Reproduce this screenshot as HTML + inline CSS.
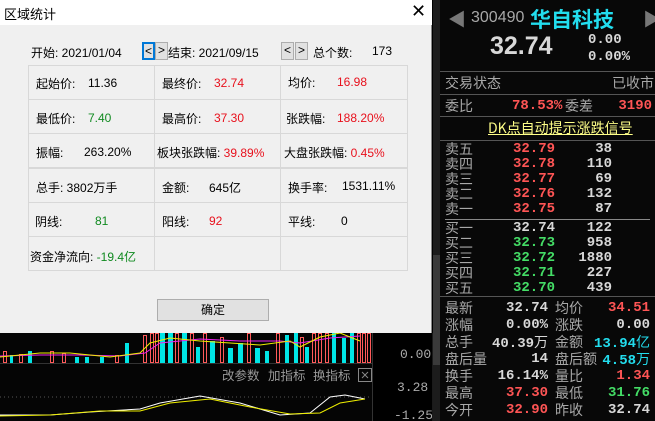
<!DOCTYPE html>
<html><head><meta charset="utf-8"><style>
*{margin:0;padding:0;box-sizing:border-box}
body{width:655px;height:421px;overflow:hidden;background:#000;font-family:"Liberation Sans","Noto Sans CJK SC",sans-serif;position:relative}
.a{position:absolute;white-space:nowrap}
#dlg{position:absolute;left:0;top:0;width:432px;height:333px;background:#f0f0f0;border-right:1px solid #888}
#tb{position:absolute;left:0;top:0;width:432px;height:25px;background:#fff}
.d{font-size:12px;color:#000}
.r{color:#e8101c}.g{color:#108a20}
.cell{position:absolute;border:1px solid #d8d8d8}
.btn{position:absolute;height:18px;width:13px;border:1px solid #adadad;background:#e1e1e1;font-size:12px;text-align:center;line-height:15px}
#rp{position:absolute;left:440px;top:0;width:215px;height:421px;background:#080808;font-family:"Liberation Mono","Noto Sans CJK SC",monospace;font-size:14px}
#rp .l{position:absolute;font-family:"Noto Sans CJK SC",sans-serif;font-size:14px;color:#a8a8a8;line-height:16px;white-space:nowrap}
#rp b{position:absolute;font-size:14px;line-height:16px;white-space:nowrap}
.gr{color:#a8a8a8}.w{color:#d8d8d8}.rd{color:#ff5555}.gn{color:#44dd66}.cy{color:#22ddee}
.hl{position:absolute;left:0;width:215px;height:1px;background:#555}
</style></head><body>
<svg class="a" style="left:0;top:333px" width="440" height="88">
<rect x="0" y="0" width="372" height="88" fill="#050505"/>
<g fill="#00e5e5">
<rect x="10" y="22" width="3" height="8"/><rect x="28" y="18" width="4" height="12"/><rect x="75" y="24" width="4" height="6"/><rect x="85" y="24" width="4" height="6"/><rect x="100" y="24" width="4" height="6"/><rect x="125" y="10" width="4" height="20"/><rect x="160" y="0" width="5" height="30"/><rect x="168" y="0" width="5" height="30"/><rect x="182" y="0" width="5" height="30"/><rect x="196" y="14" width="4" height="16"/><rect x="210" y="8" width="5" height="22"/><rect x="228" y="15" width="5" height="15"/><rect x="238" y="10" width="5" height="20"/><rect x="255" y="15" width="5" height="15"/><rect x="265" y="18" width="4" height="12"/><rect x="285" y="2" width="4" height="28"/><rect x="294" y="0" width="4" height="30"/><rect x="305" y="14" width="4" height="16"/><rect x="332" y="0" width="4" height="30"/><rect x="342" y="5" width="4" height="25"/><rect x="350" y="0" width="4" height="30"/>
</g>
<g fill="none" stroke="#ff5a5a">
<rect x="3.5" y="18.5" width="3" height="11"/><rect x="19.5" y="21.5" width="3" height="8"/><rect x="50.5" y="18.5" width="3" height="11"/><rect x="62.5" y="20.5" width="3" height="9"/><rect x="115.5" y="22.5" width="3" height="7"/><rect x="143.5" y="2.5" width="3" height="27"/><rect x="150.5" y="0.5" width="3" height="29"/><rect x="155.5" y="0.5" width="3" height="29"/><rect x="175.5" y="0.5" width="3" height="29"/><rect x="190.5" y="0.5" width="3" height="29"/><rect x="203.5" y="0.5" width="3" height="29"/><rect x="220.5" y="4.5" width="3" height="25"/><rect x="247.5" y="0.5" width="3" height="29"/><rect x="276.5" y="0.5" width="3" height="29"/><rect x="300.5" y="4.5" width="3" height="25"/><rect x="312.5" y="0.5" width="3" height="29"/><rect x="318.5" y="0.5" width="3" height="29"/><rect x="325.5" y="0.5" width="3" height="29"/><rect x="357.5" y="0.5" width="3" height="29"/><rect x="362.5" y="0.5" width="3" height="29"/><rect x="367.5" y="0.5" width="3" height="29"/>
</g>
<polyline points="0,23 40,22 80,22 120,23 145,20 160,10 200,6 240,8 280,8 300,10 330,5 360,3" stroke="#ee22ee" fill="none"/>
<polyline points="0,24 40,20 70,20 110,24 140,20 150,10 170,5 200,8 230,10 260,12 290,8 300,14 320,4 340,0 360,8" stroke="#eeee00" fill="none"/>
<rect x="0" y="30" width="372" height="1" fill="#333"/>
<rect x="372" y="0" width="1" height="88" fill="#333"/>
<text x="400" y="25" fill="#aaa" font-size="13" font-family="Liberation Mono">0.00</text>
<text x="222" y="47" fill="#999" font-size="12.5" font-family="Noto Sans CJK SC">改参数</text>
<text x="268" y="47" fill="#999" font-size="12.5" font-family="Noto Sans CJK SC">加指标</text>
<text x="313" y="47" fill="#999" font-size="12.5" font-family="Noto Sans CJK SC">换指标</text>
<rect x="358.5" y="35.5" width="13" height="13" fill="none" stroke="#888"/>
<path d="M362 39l6 6M368 39l-6 6" stroke="#888"/>
<line x1="0" y1="64" x2="372" y2="64" stroke="#555" stroke-dasharray="1,3"/>
<text x="397" y="58" fill="#aaa" font-size="13" font-family="Liberation Mono">3.28</text>
<text x="394" y="86" fill="#aaa" font-size="13" font-family="Liberation Mono">-1.25</text>
<polyline points="0,82 50,82 90,79 140,76 160,70 200,63 240,70 280,82 310,80 330,64 345,62 365,66" stroke="#fff" fill="none"/>
<polyline points="0,83 50,82 100,78 140,78 170,70 210,66 250,74 290,81 320,80 340,70 365,66" stroke="#ee0" fill="none"/>
<rect x="432" y="0" width="8" height="88" fill="#1a1a1a"/>
</svg>
<div id="dlg">
<div id="tb"><span class="a d" style="left:4px;top:4px;font-size:13px">区域统计</span><span class="a" style="left:411px;top:1px;font-size:18px">✕</span></div>
<span class="a d" style="left:31px;top:44px">开始: 2021/01/04</span>
<div class="btn" style="left:142px;top:42px;border:2px solid #0078d7">&lt;</div>
<div class="btn" style="left:155px;top:42px">&gt;</div>
<span class="a d" style="left:168px;top:44px">结束: 2021/09/15</span>
<div class="btn" style="left:281px;top:42px">&lt;</div>
<div class="btn" style="left:295px;top:42px">&gt;</div>
<span class="a d" style="left:313px;top:44px">总个数:</span><span class="a d" style="left:372px;top:44px">173</span>
<div class="cell" style="left:28px;top:65px;width:127px;height:35px"></div><div class="cell" style="left:154px;top:65px;width:127px;height:35px"></div><div class="cell" style="left:280px;top:65px;width:128px;height:35px"></div>
<div class="cell" style="left:28px;top:99px;width:127px;height:35px"></div><div class="cell" style="left:154px;top:99px;width:127px;height:35px"></div><div class="cell" style="left:280px;top:99px;width:128px;height:35px"></div>
<div class="cell" style="left:28px;top:133px;width:127px;height:35px"></div><div class="cell" style="left:154px;top:133px;width:127px;height:35px"></div><div class="cell" style="left:280px;top:133px;width:128px;height:35px"></div>
<div class="cell" style="left:28px;top:168px;width:127px;height:35px"></div><div class="cell" style="left:154px;top:168px;width:127px;height:35px"></div><div class="cell" style="left:280px;top:168px;width:128px;height:35px"></div>
<div class="cell" style="left:28px;top:202px;width:127px;height:35px"></div><div class="cell" style="left:154px;top:202px;width:127px;height:35px"></div><div class="cell" style="left:280px;top:202px;width:128px;height:35px"></div>
<div class="cell" style="left:28px;top:236px;width:127px;height:35px"></div><div class="cell" style="left:154px;top:236px;width:127px;height:35px"></div><div class="cell" style="left:280px;top:236px;width:128px;height:35px"></div>
<span class="a d" style="left:36px;top:75px">起始价:</span><span class="a d" style="left:88px;top:76px">11.36</span>
<span class="a d" style="left:162px;top:75px">最终价:</span><span class="a d r" style="left:214px;top:76px">32.74</span>
<span class="a d" style="left:288px;top:74px">均价:</span><span class="a d r" style="left:337px;top:75px">16.98</span>
<span class="a d" style="left:36px;top:110px">最低价:</span><span class="a d g" style="left:88px;top:111px">7.40</span>
<span class="a d" style="left:162px;top:110px">最高价:</span><span class="a d r" style="left:214px;top:111px">37.30</span>
<span class="a d" style="left:286px;top:110px">张跌幅:</span><span class="a d r" style="left:337px;top:111px">188.20%</span>
<span class="a d" style="left:36px;top:144px">振幅:</span><span class="a d" style="left:84px;top:145px">263.20%</span>
<span class="a d" style="left:157px;top:144px">板块张跌幅: <span class="r">39.89%</span></span>
<span class="a d" style="left:284px;top:144px">大盘张跌幅: <span class="r">0.45%</span></span>
<span class="a d" style="left:36px;top:179px">总手: 3802万手</span>
<span class="a d" style="left:162px;top:179px">金额:</span><span class="a d" style="left:209px;top:179px">645亿</span>
<span class="a d" style="left:288px;top:179px">换手率:</span><span class="a d" style="left:342px;top:179px">1531.11%</span>
<span class="a d" style="left:35px;top:213px">阴线:</span><span class="a d g" style="left:95px;top:214px">81</span>
<span class="a d" style="left:162px;top:213px">阳线:</span><span class="a d r" style="left:209px;top:214px">92</span>
<span class="a d" style="left:288px;top:213px">平线:</span><span class="a d" style="left:341px;top:214px">0</span>
<span class="a d" style="left:30px;top:248px">资金净流向: <span class="g">-19.4亿</span></span>
<div class="a" style="left:157px;top:299px;width:112px;height:22px;border:1px solid #adadad;background:#e1e1e1;font-size:12px;text-align:center;line-height:20px">确定</div>
</div>
<div class="a" style="left:433px;top:0;width:7px;height:421px;background:#1c1c1c"></div>
<div class="a" style="left:433px;top:255px;width:7px;height:110px;background:#3a3a3a"></div>
<div id="rp">
<span class="a" style="left:8px;top:6px;color:#777;font-size:18px">◀</span><span class="a" style="left:203px;top:6px;color:#777;font-size:18px">▶</span>
<span class="a gr" style="left:31px;top:9px;font-size:16px;font-family:'Liberation Sans'">300490</span>
<span class="a cy" style="left:90px;top:4px;font-size:21px;font-weight:bold;font-family:'Noto Sans CJK SC'">华自科技</span>
<span class="a w" style="left:50px;top:32px;font-size:25px;font-weight:bold;font-family:'Liberation Sans'">32.74</span>
<span class="a w" style="left:148px;top:32px;font-size:14px;font-weight:bold">0.00</span>
<span class="a w" style="left:148px;top:49px;font-size:14px;font-weight:bold">0.00%</span>
<div class="hl" style="top:71px"></div>
<span class="l" style="left:5px;top:75px">交易状态</span><span class="l" style="left:172px;top:75px">已收市</span>
<div class="hl" style="top:94px"></div>
<span class="l" style="left:5px;top:98px">委比</span><b class="rd" style="left:72px;top:98px">78.53%</b><span class="l" style="left:125px;top:98px">委差</span><b class="rd" style="right:3px;top:98px">3190</b>
<div class="hl" style="top:116px"></div>
<span class="a" style="left:48px;top:120px;color:#ffff88;text-decoration:underline;font-family:'Noto Sans CJK SC';font-size:14px;line-height:16px">DK点自动提示涨跌信号</span>
<div class="hl" style="top:140px"></div>

<span class="l" style="left:5px;top:141px">卖五</span><b class="rd" style="left:73px;top:141px">32.79</b><b class="w" style="right:43px;top:141px">38</b>
<span class="l" style="left:5px;top:156px">卖四</span><b class="rd" style="left:73px;top:156px">32.78</b><b class="w" style="right:43px;top:156px">110</b>
<span class="l" style="left:5px;top:171px">卖三</span><b class="rd" style="left:73px;top:171px">32.77</b><b class="w" style="right:43px;top:171px">69</b>
<span class="l" style="left:5px;top:186px">卖二</span><b class="rd" style="left:73px;top:186px">32.76</b><b class="w" style="right:43px;top:186px">132</b>
<span class="l" style="left:5px;top:201px">卖一</span><b class="rd" style="left:73px;top:201px">32.75</b><b class="w" style="right:43px;top:201px">87</b>
<div class="hl" style="top:219px;left:5px;width:205px;background:#888"></div>
<span class="l" style="left:5px;top:220px">买一</span><b class="w" style="left:73px;top:220px">32.74</b><b class="w" style="right:43px;top:220px">122</b>
<span class="l" style="left:5px;top:235px">买二</span><b class="gn" style="left:73px;top:235px">32.73</b><b class="w" style="right:43px;top:235px">958</b>
<span class="l" style="left:5px;top:250px">买三</span><b class="gn" style="left:73px;top:250px">32.72</b><b class="w" style="right:43px;top:250px">1880</b>
<span class="l" style="left:5px;top:265px">买四</span><b class="gn" style="left:73px;top:265px">32.71</b><b class="w" style="right:43px;top:265px">227</b>
<span class="l" style="left:5px;top:280px">买五</span><b class="gn" style="left:73px;top:280px">32.70</b><b class="w" style="right:43px;top:280px">439</b>
<div class="hl" style="top:296px"></div>

<span class="l" style="left:5px;top:300px">最新</span><b class="w" style="right:107px;top:300px">32.74</b><span class="l" style="left:115px;top:300px">均价</span><b class="rd" style="right:5px;top:300px">34.51</b>
<span class="l" style="left:5px;top:317px">涨幅</span><b class="w" style="right:107px;top:317px">0.00%</b><span class="l" style="left:115px;top:317px">涨跌</span><b class="w" style="right:5px;top:317px">0.00</b>
<span class="l" style="left:5px;top:334px">总手</span><b class="w" style="right:107px;top:334px">40.39<span style="font-family:'Noto Sans CJK SC';font-weight:normal">万</span></b><span class="l" style="left:115px;top:334px">金额</span><b class="cy" style="right:5px;top:334px">13.94<span style="font-family:'Noto Sans CJK SC';font-weight:normal">亿</span></b>
<span class="l" style="left:5px;top:351px">盘后量</span><b class="w" style="right:107px;top:351px">14</b><span class="l" style="left:115px;top:351px">盘后额</span><b class="cy" style="right:5px;top:351px">4.58<span style="font-family:'Noto Sans CJK SC';font-weight:normal">万</span></b>
<span class="l" style="left:5px;top:368px">换手</span><b class="w" style="right:107px;top:368px">16.14%</b><span class="l" style="left:115px;top:368px">量比</span><b class="rd" style="right:5px;top:368px">1.34</b>
<span class="l" style="left:5px;top:385px">最高</span><b class="rd" style="right:107px;top:385px">37.30</b><span class="l" style="left:115px;top:385px">最低</span><b class="gn" style="right:5px;top:385px">31.76</b>
<span class="l" style="left:5px;top:402px">今开</span><b class="rd" style="right:107px;top:402px">32.90</b><span class="l" style="left:115px;top:402px">昨收</span><b class="w" style="right:5px;top:402px">32.74</b>
</div>
</body></html>
